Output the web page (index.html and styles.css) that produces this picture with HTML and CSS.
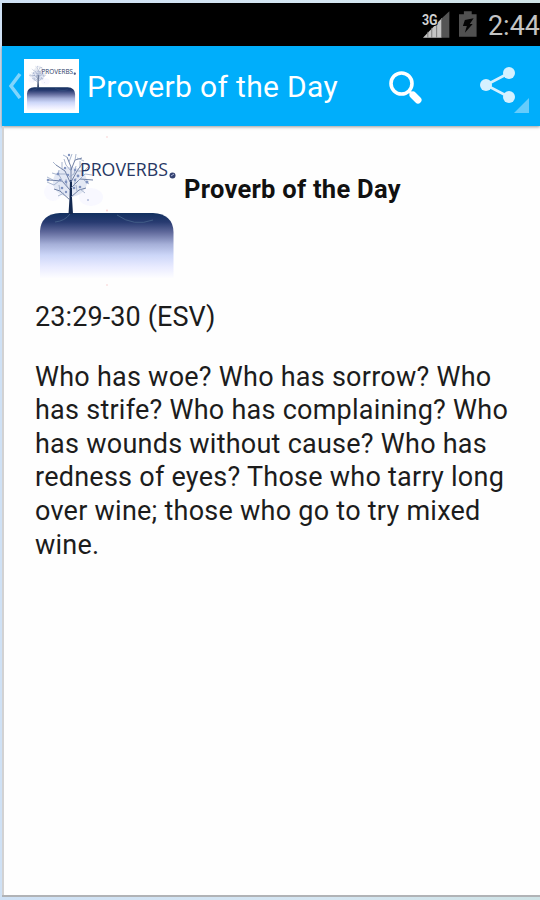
FILE: index.html
```html
<!DOCTYPE html>
<html lang="en">
<head>
  <meta charset="UTF-8">
  <meta name="viewport" content="width=device-width, initial-scale=1.0">
  <title>Proverb of the Day</title>
  <link rel="stylesheet" href="styles.css">
</head>
<body>
  <div class="screen">
    <div class="status-bar">
      <svg class="signal" viewBox="0 0 30 28" width="30" height="28">
        <path d="M2 28 L21 8.500 V28 Z" fill="#c4c4c4"/>
        <path d="M21 8.500 L29 1 V28 H21 Z" fill="#555"/>
        <path d="M7 22V28M11 18V28M16 14V28M21 8V28" stroke="#777" stroke-width="1"/>
        <text x="1" y="15" class="network" textLength="16" lengthAdjust="spacingAndGlyphs">3G</text>
      </svg>
      <svg class="battery" viewBox="0 0 18 26" width="18" height="26">
        <path d="M0 3H5V0H13V3H18V26H0Z" fill="#505050"/>
        <path d="M6 9L15 7L11 13L14 13L6 22L8 15L4 15Z" fill="#050505"/>
      </svg>
      <span class="clock">2:44</span>
    </div>

    <header class="action-bar">
      <svg class="back" viewBox="0 0 14 26" width="14" height="26">
        <path d="M12 1L3 13L12 25" fill="none" stroke="#80d5fc" stroke-width="3.500"/>
      </svg>
      <div class="app-icon">
        <svg viewBox="38 146 140 136" width="51" height="49">
          <use href="#logo"/>
        </svg>
      </div>
      <h1>Proverb of the Day</h1>
      <svg class="search" viewBox="0 0 36 36" width="36" height="36">
        <circle cx="13.500" cy="13.500" r="10.500" fill="none" stroke="#fff" stroke-width="3.600"/>
        <path d="M21 21L25 25" stroke="#fff" stroke-width="3"/>
        <path d="M25 25L30 30" stroke="#fff" stroke-width="7" stroke-linecap="round"/>
      </svg>
      <svg class="share" viewBox="0 0 50 48" width="50" height="48">
        <path d="M30 8L7 20L30 32" fill="none" stroke="#d5f1ff" stroke-width="2.600"/>
        <g fill="#d5f1ff">
          <circle cx="30" cy="8" r="6"/>
          <circle cx="7" cy="20" r="6"/>
          <circle cx="30" cy="32" r="6"/>
        </g>
        <path d="M50 33V48H35Z" fill="#66ccfb"/>
      </svg>
    </header>

    <main>
      <div class="intro">
        <svg class="logo" viewBox="34 136 150 150" width="150" height="150">
          <defs>
            <linearGradient id="ground" x1="0" y1="0" x2="0" y2="1">
              <stop offset="0" stop-color="#12305f"/>
              <stop offset=".14" stop-color="#273a70"/>
              <stop offset=".3" stop-color="#626b9d"/>
              <stop offset=".48" stop-color="#a5afd8"/>
              <stop offset=".65" stop-color="#ccd6f8"/>
              <stop offset=".83" stop-color="#e9ebff"/>
              <stop offset="1" stop-color="#fdfdff"/>
            </linearGradient>
          </defs>
          <g id="logo">
            <ellipse cx="53" cy="192" rx="9" ry="9" fill="#f9f9ff"/>
            <ellipse cx="91" cy="197" rx="12" ry="9" fill="#f8f8ff"/>
            <ellipse cx="70" cy="182" rx="17" ry="15" fill="#e3e8f4"/>
            <path d="M40 278V231Q41 214 60 213H153Q173 214 173.500 232V278Z" fill="url(#ground)"/>
            <path d="M117 215Q134 227 153 220M55 222Q65 221 70 214" fill="none" stroke="#47658c" stroke-width=".8"/>
            <!-- trunk -->
            <path d="M68.500 214L69.500 198L70 180H72L72 198L73 214Z" fill="#122850"/>
            <!-- main branches -->
            <g fill="none" stroke="#61739a" stroke-width=".9">
              <path d="M70 200L60 191L54 189M71 197L79 190L86 188M70 190L62 181L49 180M71 188L80 179L93 180M70 182L65 171L56 165M71 182L77 171L82 164M71 182L71 167L67 157M71 170L75 160L82 158"/>
            </g>
            <!-- twigs -->
            <g fill="none" stroke="#94a4c3" stroke-width=".8">
              <path d="M64 193L58 196M60 191L59 185M63 182L59 175L52 173M59 181L54 185L47 182M58 175L59 170M66 174L59 174M62 169L62 162M56 165L53 162M71 171L66 165L64 159M67 157L63 155M69 162L72 154M75 160L76 154M77 158L84 161M77 171L84 171L88 167M80 168L80 161M78 181L85 174L92 175M84 180L89 184M80 189L85 193M77 191L76 185M74 186L76 178M67 187L66 179M69 177L74 174L76 166M53 180L47 177"/>
            </g>
            <!-- leaves -->
            <g fill="#8093c0">
              <circle cx="48" cy="180" r="1.300"/><circle cx="58" cy="174" r="1.300"/>
              <circle cx="65" cy="168" r="1.200"/><circle cx="78" cy="176" r="1.400"/>
              <circle cx="87" cy="182" r="1.500"/><circle cx="62" cy="188" r="1.300"/>
              <circle cx="66" cy="182" r="1.400"/><circle cx="80" cy="187" r="1.300"/>
              <circle cx="69" cy="155" r="1.200"/><circle cx="88" cy="200" r=".8"/>
              <circle cx="75" cy="180" r="1.300"/><circle cx="60" cy="180" r="1.200"/>
              <circle cx="68" cy="175" r="1.300"/><circle cx="66" cy="192" r="1.200"/>
              <circle cx="75" cy="170" r="1.200"/><circle cx="74" cy="188" r="1.300"/>
            </g>
            <text x="80" y="176" class="wordmark" textLength="88" lengthAdjust="spacingAndGlyphs">PROVERBS</text>
            <circle cx="172.500" cy="175.500" r="3" fill="#34416f"/>
            <path d="M171 176L174 174" stroke="#a9b2d8" stroke-width="1"/>
          </g>
          <g fill="#f8cccc">
            <circle cx="107" cy="137" r=".8"/>
            <circle cx="107" cy="210.500" r=".9"/>
            <circle cx="107" cy="285" r=".8"/>
          </g>
        </svg>
        <h2>Proverb of the Day</h2>
      </div>
      <p class="reference">23:29-30 (ESV)</p>
      <p class="verse">Who has woe? Who has sorrow? Who<br>has strife? Who has complaining? Who<br>has wounds without cause? Who has<br>redness of eyes? Those who tarry long<br>over wine; those who go to try mixed<br>wine.</p>
    </main>
  </div>
</body>
</html>
```
FILE: styles.css
```css
* {
  box-sizing: border-box;
}
body {
  margin: 0;
  height: 900px;
  padding: 3px 0 3px 2px;
  background: linear-gradient(to right, #cfe1f5, #d5e6f2 60%, #cfe3e6);
  font-family: Roboto, "Liberation Sans", sans-serif;
  overflow: hidden;
}
.screen {
  height: 894px;
  display: flex;
  flex-direction: column;
  background: #fefefe;
  border-bottom: 2px solid #b1b3b6;
}
.status-bar {
  height: 43px;
  flex-shrink: 0;
  display: flex;
  align-items: flex-start;
  padding-left: 419px;
  background: #000;
}
.signal {
  margin-top: 7px;
}
.network {
  font-size: 15px;
  font-weight: bold;
  fill: #d0d0d0;
  stroke: #000;
  stroke-width: 2px;
  paint-order: stroke;
}
.battery {
  margin: 8px 0 0 9px;
}
.clock {
  margin: 7px 0 0 11px;
  font-size: 27px;
  line-height: 32px;
  color: #c4c4c4;
  white-space: nowrap;
}
.action-bar {
  height: 80px;
  flex-shrink: 0;
  display: flex;
  align-items: flex-start;
  padding-left: 6px;
  background: #00aefb;
  color: #fff;
  box-shadow: 0 1px 3px rgba(0,0,0,0.4);
}
.back {
  margin-top: 27px;
}
.app-icon {
  width: 55px;
  height: 54px;
  margin: 13px 0 0 2px;
  padding: 4px 2px 0;
  background: #fff;
}
.app-icon svg {
  display: block;
}
.action-bar h1 {
  width: 252px;
  margin: 23px 0 0 8px;
  font-size: 30px;
  line-height: 36px;
  letter-spacing: 0.33px;
  font-weight: normal;
  white-space: nowrap;
}
.search {
  margin: 24px 0 0 49px;
}
.share {
  margin: 19px 0 0 55px;
}
main {
  flex: 1;
  padding: 10px 20px 0 31px;
  border-left: 2px solid #d2d2d3;
  color: #1c1c1c;
}
.intro {
  display: flex;
}
.logo {
  flex-shrink: 0;
  margin-left: -1px;
}
.wordmark {
  font-family: "Open Sans", "Noto Sans", sans-serif;
  font-size: 19px;
  fill: #283764;
}
.intro h2 {
  margin: 37px 0 0;
  font-size: 25.5px;
  line-height: 32px;
  letter-spacing: 0.27px;
  font-weight: bold;
  white-space: nowrap;
  color: #111;
}
.reference,
.verse {
  margin: 0;
  font-size: 27px;
  line-height: 33.6px;
  white-space: nowrap;
}
.reference {
  margin-top: 15px;
  letter-spacing: 0.1px;
}
.verse {
  margin-top: 26px;
  letter-spacing: 0.25px;
}
```
